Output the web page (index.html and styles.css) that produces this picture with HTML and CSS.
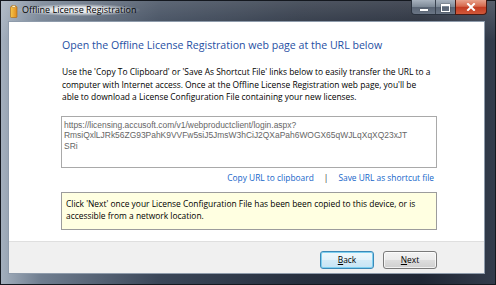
FILE: index.html
```html
<!DOCTYPE html>
<html>
<head>
<meta charset="utf-8">
<link rel="stylesheet" href="styles.css">
</head>
<body>
<div class="window">
  <div class="titlebar">
    <svg class="app-icon" width="8" height="13" viewBox="0 0 8 13">
      <defs>
        <linearGradient id="ig" x1="0" y1="0" x2="1" y2="0">
          <stop offset="0" stop-color="#f7c84a"/>
          <stop offset="1" stop-color="#e08a1e"/>
        </linearGradient>
      </defs>
      <rect x="0.5" y="1.5" width="6.5" height="11" rx="0.8" fill="url(#ig)" stroke="#a8650f" stroke-width="0.6"/>
      <rect x="2" y="0.5" width="3.5" height="2.2" fill="#fff3c0" stroke="#a8650f" stroke-width="0.5"/>
    </svg>
    <span class="title">Offline License Registration</span>
    <div class="caption-buttons">
      <div class="cap-group">
        <div class="cap-btn cap-min"><span class="glyph-min"></span></div>
        <div class="cap-btn cap-max"><span class="glyph-max"></span></div>
      </div>
      <div class="cap-btn cap-close">
        <svg width="10" height="8" viewBox="0 0 10 8"><path d="M2 1 L8 7 M8 1 L2 7" stroke="#fff" stroke-width="2" stroke-linecap="square"/></svg>
      </div>
    </div>
  </div>
  <div class="client">
    <div class="content">
      <h1 class="heading">Open the Offline License Registration web page at the URL below</h1>
      <p class="intro">Use the 'Copy To Clipboard' or 'Save As Shortcut File' links below to easily transfer the URL to a<br>computer with Internet access. Once at the Offline License Registration web page, you'll be<br>able to download a License Configuration File containing your new licenses.</p>
      <div class="urlbox">https://licensing.accusoft.com/v1/webproductclient/login.aspx?<br>RmsiQxlLJRk56ZG93PahK9VVFw5siJ5JmsW3hCiJ2QXaPah6WOGX65qWJLqXqXQ23xJT<br>SRi</div>
      <div class="links">
        <a class="link">Copy URL to clipboard</a>
        <span class="sep">|</span>
        <a class="link">Save URL as shortcut file</a>
      </div>
      <div class="note">Click 'Next' once your License Configuration File has been been copied to this device, or is<br>accessible from a network location.</div>
    </div>
    <div class="footer">
      <button class="btn btn-default"><u>B</u>ack</button>
      <button class="btn"><u>N</u>ext</button>
    </div>
  </div>
</div>
</body>
</html>
```
FILE: styles.css
```css
html, body {
  margin: 0;
  padding: 0;
  width: 496px;
  height: 285px;
  overflow: hidden;
  background: #1c2230;
}

.window {
  width: 496px;
  height: 285px;
  box-sizing: border-box;
  padding: 0 10px 10px 7px;
  display: flex;
  flex-direction: column;
  background:
    linear-gradient(to bottom, rgba(255,255,255,0.18), rgba(255,255,255,0) 40px),
    linear-gradient(to right, #a3afbd 0px, #6f7d8f 40px, #3a4658 160px, #27303f 300px, #1f2634 420px, #333c4c 496px);
  border: 1px solid #14181f;
  font-family: "Open Sans", "Noto Sans", sans-serif;
}

.titlebar {
  height: 19px;
  display: flex;
  align-items: flex-start;
  margin-right: -9px;
}

.app-icon {
  margin: 4px 0 0 2px;
}

.title {
  margin: 3px 0 0 0;
  font-family: "Open Sans", sans-serif;
  font-size: 9px;
  line-height: 12px;
  color: #000;
  background: radial-gradient(ellipse at center, rgba(255,255,255,0.85) 30%, rgba(255,255,255,0) 72%);
  padding: 0 4px;
}

.caption-buttons {
  margin-left: auto;
  margin-right: 7px;
  margin-top: -1px;
  display: flex;
  height: 15px;
}

.cap-group {
  display: flex;
  border: 1px solid #2a323e;
  border-top: none;
  border-right: none;
  border-radius: 0 0 0 4px;
  overflow: hidden;
}

.cap-btn {
  height: 15px;
  box-sizing: border-box;
  display: flex;
  align-items: center;
  justify-content: center;
}

.cap-min {
  width: 24px;
  background: linear-gradient(to bottom, #a9b3bf 0%, #7e8a98 45%, #5b6676 50%, #6d7888 100%);
  border-right: 1px solid #3a4350;
}

.cap-max {
  width: 19px;
  background: linear-gradient(to bottom, #a9b3bf 0%, #7e8a98 45%, #5b6676 50%, #6d7888 100%);
}

.glyph-min {
  width: 8px;
  height: 2px;
  margin-top: 5px;
  background: #fff;
  box-shadow: 0 0 1px #222;
}

.glyph-max {
  width: 7px;
  height: 5px;
  border: 1px solid #fff;
  border-top-width: 2px;
  box-shadow: 0 0 1px #222;
}

.cap-close {
  width: 32px;
  border: 1px solid #4a1a12;
  border-top: none;
  border-radius: 0 0 4px 0;
  background: linear-gradient(to bottom, #e9a28c 0%, #d6694d 45%, #c33c22 52%, #d0583a 100%);
}

.client {
  flex: 1;
  display: flex;
  flex-direction: column;
  background: #fff;
  border: 1px solid #8e9bab;
  margin-top: 1px;
}

.content {
  flex: 1;
  padding: 16px 47px 0 52px;
  display: flex;
  flex-direction: column;
}

.heading {
  margin: 0;
  font-family: "Open Sans", sans-serif;
  font-weight: normal;
  font-size: 10.6px;
  line-height: 15px;
  color: #1f4fa3;
  padding-left: 1px;
}

.intro {
  margin: 13px 0 0 0;
  padding-left: 1px;
  font-size: 8.42px;
  line-height: 12.5px;
  color: #000;
}

.urlbox {
  margin-top: 12px;
  height: 52px;
  box-sizing: border-box;
  border: 1px solid #a9a9a9;
  padding: 3px 2px 0 2px;
  font-family: "Liberation Sans", Arial, sans-serif;
  font-size: 8.45px;
  line-height: 10.5px;
  color: #666;
}

.links {
  margin-top: 4px;
  display: flex;
  justify-content: flex-end;
  align-items: center;
  gap: 9px;
  font-size: 8.4px;
  line-height: 12px;
  padding-right: 3px;
}

.link {
  color: #1565c9;
}

.sep {
  color: #333;
  padding: 0 1px;
}

.note {
  margin-top: 8px;
  background: #ffffe1;
  border: 1px solid #9c9c9c;
  padding: 5px 4px 6px 4px;
  font-size: 8.42px;
  line-height: 12.5px;
  color: #000;
}

.footer {
  height: 32px;
  box-sizing: border-box;
  background: #f0f0f0;
  border-top: 1px solid #dfdfdf;
  display: flex;
  justify-content: flex-end;
  align-items: flex-start;
  padding: 9px 47px 0 0;
  gap: 9px;
}

.btn {
  width: 54px;
  height: 18px;
  box-sizing: border-box;
  padding: 0;
  font-family: "Open Sans", sans-serif;
  font-size: 8.4px;
  line-height: 14px;
  color: #000;
  border: 1px solid #7a7a7a;
  border-radius: 3px;
  background: linear-gradient(to bottom, #f3f3f3 0%, #ebebeb 48%, #dddddd 52%, #cfcfcf 100%);
  box-shadow: inset 0 0 0 1px rgba(255,255,255,0.7);
}

.btn-default {
  border-color: #3c89b8;
  background: linear-gradient(to bottom, #f0f8fc 0%, #e5f3fb 48%, #d4ebf7 52%, #c6e4f5 100%);
  box-shadow: inset 0 0 0 1px #7fd0f0;
}
```
